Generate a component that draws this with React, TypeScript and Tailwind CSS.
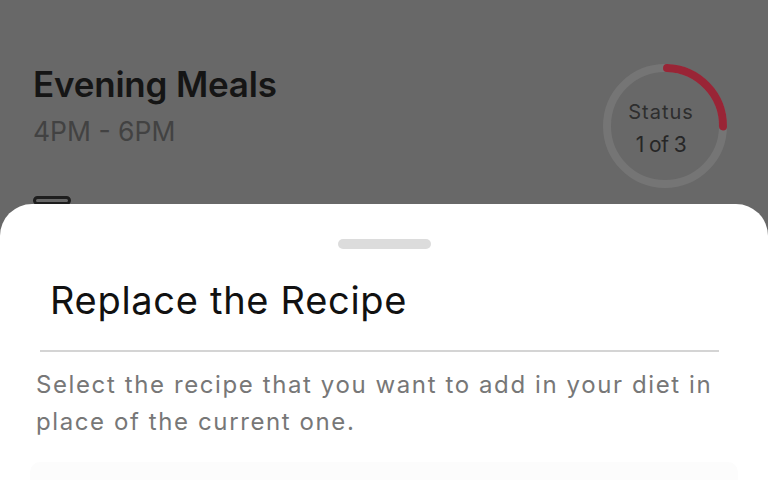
import React from "react";

function StatusRing() {
  const r = 58;
  const c = 2 * Math.PI * r;
  return (
    <div className="relative w-[132px] h-[132px]">
      <svg width="132" height="132" viewBox="0 0 132 132" className="absolute inset-0">
        <circle cx="66" cy="66" r={r} fill="none" stroke="#757575" strokeWidth="8" />
        <circle
          cx="66"
          cy="66"
          r={r}
          fill="none"
          stroke="#992536"
          strokeWidth="8"
          strokeLinecap="round"
          strokeDasharray={`${c * 0.245} ${c}`}
          transform="rotate(-88 66 66)"
        />
      </svg>
      <div className="absolute inset-0 flex flex-col items-center justify-center pt-[6px] pr-[8px]">
        <span className="text-[20px] leading-[24px] text-[#2e2e2e] tracking-[1px]">Status</span>
        <span className="mt-[8px] text-[21px] leading-[26px] text-[#262626] tracking-[-0.5px]">1 of 3</span>
      </div>
    </div>
  );
}

export default function App() {
  return (
    <div
      className="w-[768px] h-[480px] overflow-hidden bg-[#686868] flex flex-col"
      style={{ fontFamily: "Inter, 'Open Sans', sans-serif" }}
    >
      <div className="h-[205px] shrink-0 flex justify-between pl-[33px] pr-[37px] pt-[62px]">
        <div className="flex flex-col">
          <span className="text-[35px] leading-[44px] font-semibold text-[#151515] tracking-[-0.2px]">Evening Meals</span>
          <span className="text-[26.5px] leading-[34px] text-[#424242] mt-[8px]">4PM - 6PM</span>
          <div className="mt-[48px] w-[38px] h-[30px] border-[3px] border-[#1e1e1e] rounded-[5px]" />
        </div>
        <div className="-mt-[2px]">
          <StatusRing />
        </div>
      </div>
      <div className="relative z-10 -mt-[1px] flex-1 bg-white rounded-t-[32px] flex flex-col">
        <div className="flex justify-center pt-[35px]">
          <div className="w-[93px] h-[10px] rounded-full bg-[#dcdcdc]" />
        </div>
        <div className="pl-[50px] pt-[27px] text-[38px] leading-[48px] text-[#111] tracking-[0.7px]">
          Replace the Recipe
        </div>
        <div className="ml-[40px] mt-[26px] w-[679px] h-[2px] bg-[#d4d4d4]" />
        <div className="pl-[36px] pr-[40px] pt-[14px] text-[24px] leading-[37px] text-[#777] tracking-[1.6px]">
          Select the recipe that you want to add in your diet in place of the current one.
        </div>
        <div className="ml-[30px] mt-[22px] w-[708px] flex-1 bg-[#fcfcfc] rounded-t-[10px]" />
      </div>
    </div>
  );
}
